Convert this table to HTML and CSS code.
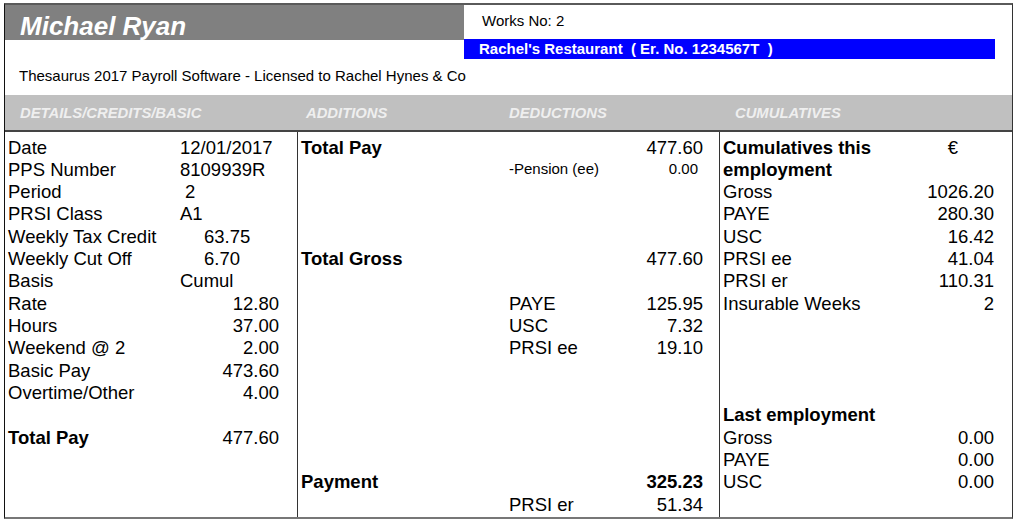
FILE: index.html
```html
<!DOCTYPE html>
<html>
<head>
<meta charset="utf-8">
<title>Payslip - Michael Ryan</title>
<link rel="stylesheet" href="styles.css">
</head>
<body>
<div class="sheet">
  <div class="title-row">
    <div class="name">Michael Ryan</div>
    <div class="works">Works No: 2</div>
  </div>
  <div class="employer-row">
    <div class="employer">Rachel's Restaurant&nbsp; ( Er. No. 1234567T&nbsp; )</div>
  </div>
  <div class="license">Thesaurus 2017 Payroll Software - Licensed to Rachel Hynes &amp; Co</div>

  <div class="col-heads">
    <div class="head head-details">DETAILS/CREDITS/BASIC</div>
    <div class="head-mid">
      <div class="head head-add">ADDITIONS</div>
      <div class="head head-ded">DEDUCTIONS</div>
    </div>
    <div class="head head-cum">CUMULATIVES</div>
  </div>

  <div class="body">
    <div class="col col-left">
      <div class="lrow"><span>Date</span><span>12/01/2017</span></div>
      <div class="lrow"><span>PPS Number</span><span>8109939R</span></div>
      <div class="lrow"><span>Period</span><span class="pad-sp">2</span></div>
      <div class="lrow"><span>PRSI Class</span><span>A1</span></div>
      <div class="lrow"><span>Weekly Tax Credit</span><span class="pad-in">63.75</span></div>
      <div class="lrow"><span>Weekly Cut Off</span><span class="pad-in">6.70</span></div>
      <div class="lrow"><span>Basis</span><span>Cumul</span></div>
      <div class="lrow"><span>Rate</span><span class="num">12.80</span></div>
      <div class="lrow"><span>Hours</span><span class="num">37.00</span></div>
      <div class="lrow"><span>Weekend @ 2</span><span class="num">2.00</span></div>
      <div class="lrow"><span>Basic Pay</span><span class="num">473.60</span></div>
      <div class="lrow"><span>Overtime/Other</span><span class="num">4.00</span></div>
      <div class="lrow"></div>
      <div class="lrow"><span class="b">Total Pay</span><span class="num">477.60</span></div>
    </div>

    <div class="col col-mid">
      <div class="mrow"><span class="b">Total Pay</span><span></span><span class="num">477.60</span></div>
      <div class="mrow small"><span></span><span>-Pension (ee)</span><span class="num sub">0.00</span></div>
      <div class="mrow"></div>
      <div class="mrow"></div>
      <div class="mrow"></div>
      <div class="mrow"><span class="b">Total Gross</span><span></span><span class="num">477.60</span></div>
      <div class="mrow"></div>
      <div class="mrow"><span></span><span>PAYE</span><span class="num">125.95</span></div>
      <div class="mrow"><span></span><span>USC</span><span class="num">7.32</span></div>
      <div class="mrow"><span></span><span>PRSI ee</span><span class="num">19.10</span></div>
      <div class="mrow"></div>
      <div class="mrow"></div>
      <div class="mrow"></div>
      <div class="mrow"></div>
      <div class="mrow"></div>
      <div class="mrow"><span class="b">Payment</span><span></span><span class="num b">325.23</span></div>
      <div class="mrow"><span></span><span>PRSI er</span><span class="num">51.34</span></div>
    </div>

    <div class="col col-right">
      <div class="rrow"><span class="b">Cumulatives this</span><span class="euro">€</span></div>
      <div class="rrow"><span class="b">employment</span><span></span></div>
      <div class="rrow"><span>Gross</span><span class="num">1026.20</span></div>
      <div class="rrow"><span>PAYE</span><span class="num">280.30</span></div>
      <div class="rrow"><span>USC</span><span class="num">16.42</span></div>
      <div class="rrow"><span>PRSI ee</span><span class="num">41.04</span></div>
      <div class="rrow"><span>PRSI er</span><span class="num">110.31</span></div>
      <div class="rrow"><span>Insurable Weeks</span><span class="num">2</span></div>
      <div class="rrow"></div>
      <div class="rrow"></div>
      <div class="rrow"></div>
      <div class="rrow"></div>
      <div class="rrow"><span class="b">Last employment</span><span></span></div>
      <div class="rrow"><span>Gross</span><span class="num">0.00</span></div>
      <div class="rrow"><span>PAYE</span><span class="num">0.00</span></div>
      <div class="rrow"><span>USC</span><span class="num">0.00</span></div>
    </div>
  </div>
</div>
</body>
</html>
```

FILE: styles.css
```css
* { box-sizing: border-box; }

body {
  margin: 0;
  background: #ffffff;
  font-family: "Liberation Sans", Arial, sans-serif;
  color: #000;
}

.sheet {
  margin: 3px 0 0 4px;
  width: 1009px;
  border-left: 1px solid #111;
  border-right: 1px solid #333;
  border-top: 2px solid #5a5a5a;
  border-bottom: 2px solid #777;
}

.title-row {
  display: flex;
  height: 34px;
}

.name {
  width: 459px;
  height: 35px;
  background: #808080;
  color: #fff;
  font-weight: bold;
  font-style: italic;
  font-size: 26px;
  line-height: 29px;
  padding: 7px 0 0 15px;
}

.works {
  flex: 1;
  font-size: 15px;
  line-height: 17px;
  padding: 7px 0 0 18px;
}

.employer-row {
  height: 20px;
  padding-left: 459px;
}

.employer {
  width: 531px;
  height: 20px;
  background: #0000ff;
  color: #fff;
  font-weight: bold;
  font-size: 15px;
  line-height: 20px;
  padding-left: 15px;
  white-space: pre;
}

.license {
  height: 36px;
  font-size: 15px;
  line-height: 17px;
  padding: 8px 0 0 14px;
}

.col-heads {
  display: grid;
  grid-template-columns: 293px 422px 1fr;
  height: 37px;
  background: #c0c0c0;
  border-bottom: 2px solid #444;
}

.head {
  color: #efefef;
  font-weight: bold;
  font-style: italic;
  font-size: 14.8px;
  line-height: 17px;
  padding-top: 10px;
}

.head-details { padding-left: 15px; }

.head-mid { display: flex; }
.head-add { width: 211px; padding-left: 8px; }
.head-cum { padding-left: 15px; }

.body {
  display: grid;
  grid-template-columns: 293px 422px 1fr;
  height: 385px;
}

.col {
  padding-top: 4.5px;
  font-size: 18.5px;
}

.col-left, .col-mid {
  border-right: 1px solid #333;
}

.lrow, .mrow, .rrow {
  height: 22.33px;
  line-height: 22.33px;
  white-space: nowrap;
}

.lrow {
  display: grid;
  grid-template-columns: 172px 1fr;
  padding: 0 18px 0 3px;
}

.mrow {
  display: grid;
  grid-template-columns: 208px 1fr auto;
  padding: 0 16px 0 3px;
}

.rrow {
  display: grid;
  grid-template-columns: 1fr auto;
  padding: 0 18px 0 3px;
}

.num { text-align: right; }
.pad-sp { padding-left: 5px; }
.pad-in { padding-left: 24px; }
.b { font-weight: bold; }

.small { font-size: 15px; line-height: 19px; }
.sub { padding-right: 5px; }

.euro { padding-right: 36px; }
```
